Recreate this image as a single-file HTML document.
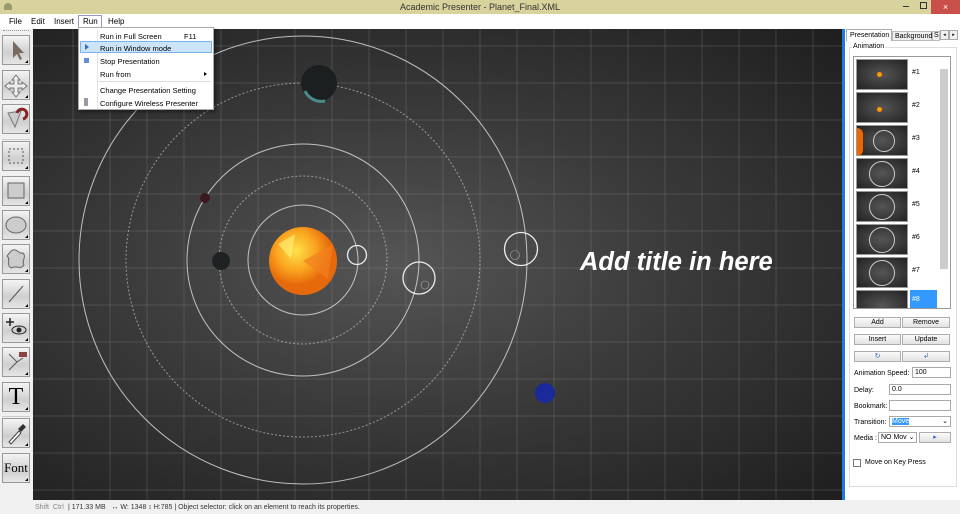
<!DOCTYPE html>
<html><head><style>
*{margin:0;padding:0;box-sizing:border-box}
body{width:960px;height:514px;overflow:hidden;background:#f0f0f0;font-family:"Liberation Sans",sans-serif;font-size:8px;color:#000;position:relative}
.abs{position:absolute}
#title{left:0;top:0;width:960px;height:14px;background:#d8d29c;}
#menu{top:14px;left:0;width:960px;height:15px;background:#fff;font-size:8px}
#menu span{position:absolute;top:3px}
.tool{position:absolute;left:2px;width:28px;height:30px;background:linear-gradient(#f4f4f4,#cfcfcf 60%,#e6e6e6);border:1px solid #999;}
.tool:after{content:"";position:absolute;right:1px;bottom:1px;border-left:3px solid transparent;border-bottom:3px solid #000}
#canvas{left:33px;top:29px;width:809px;height:471px;background:radial-gradient(ellipse at 45% 50%,#555 0%,#3a3a3a 45%,#1e1e1e 100%)}
#dd{left:78px;top:27px;width:136px;height:83px;background:#fff;border:1px solid #aaa;box-shadow:2px 2px 3px rgba(0,0,0,.4);font-size:7.5px}
#dd div{position:absolute;left:21px}
#panel{left:842px;top:29px;width:118px;height:471px;background:#fff;border-left:3px solid #1c7be0}
.btn{position:absolute;height:11px;background:linear-gradient(#fafafa,#e2e2e2);border:1px solid #adadad;font-size:7px;text-align:center;line-height:9px}
.inp{position:absolute;height:11px;background:#fff;border:1px solid #aaa;font-size:7px;line-height:9px;padding-left:2px}
.lbl{position:absolute;font-size:7px}
.th{position:absolute;left:12px;width:52px;height:31px;background:radial-gradient(#555,#222);border:1px solid #999;overflow:hidden}
.tn{position:absolute;left:68px;font-size:7px}
#status{left:33px;top:501px;width:927px;height:13px;font-size:7px;color:#333}
#status span{position:absolute;top:3px}
</style></head><body>
<div id="title" class="abs">
 <div class="abs" style="left:4px;top:3px;width:8px;height:7px;background:#9a9a70;border-radius:4px 4px 0 0"></div>
 <div class="abs" style="left:0;width:960px;top:2px;text-align:center;font-size:9px;color:#333">Academic Presenter - Planet_Final.XML</div>
 <div class="abs" style="left:903px;top:6px;width:6px;height:1px;background:#333"></div>
 <div class="abs" style="left:920px;top:2px;width:7px;height:7px;border:1px solid #333"></div>
 <div class="abs" style="left:931px;top:0;width:29px;height:14px;background:#c9504a;color:#fff;text-align:center;font-size:9px;line-height:14px">×</div>
</div>
<div id="menu" class="abs">
 <span style="left:9px">File</span><span style="left:31px">Edit</span><span style="left:54px">Insert</span>
 <div class="abs" style="left:78px;top:1px;width:24px;height:14px;border:1px solid #99b;border-bottom:none;background:#fff"></div>
 <span style="left:83px">Run</span><span style="left:108px">Help</span>
</div>
<div class="abs" style="left:3px;top:30px;width:26px;border-top:1px dotted #999"></div>
<div class="tool" style="top:35px"><svg width="26" height="28"><path d="M10 5 L10 22 L14 18 L17 24 L19 23 L16 17 L21 17 Z" fill="#7a6a60"/></svg></div>
<div class="tool" style="top:70px"><svg width="26" height="28"><path d="M13 4 L17 9 L15 9 L15 13 L19 13 L19 11 L24 15 L19 19 L19 17 L15 17 L15 21 L17 21 L13 26 L9 21 L11 21 L11 17 L7 17 L7 19 L2 15 L7 11 L7 13 L11 13 L11 9 L9 9 Z" fill="#eee" stroke="#777"/></svg></div>
<div class="tool" style="top:104px"><svg width="26" height="28"><path d="M5 8 L18 6 L12 22 Z" fill="#ccc" stroke="#777"/><path d="M14 8 a5 5 0 1 1 6 6" stroke="#822" stroke-width="3" fill="none"/></svg></div>
<div class="abs" style="left:2px;top:139px;width:28px;border-top:1px solid #ccc"></div>
<div class="tool" style="top:141px"><svg width="26" height="28"><rect x="6" y="7" width="14" height="14" fill="none" stroke="#555" stroke-dasharray="2 2"/></svg></div>
<div class="tool" style="top:176px"><svg width="26" height="28"><rect x="5" y="6" width="16" height="15" fill="#ccc" stroke="#666"/></svg></div>
<div class="tool" style="top:210px"><svg width="26" height="28"><ellipse cx="13" cy="14" rx="10" ry="8" fill="#ccc" stroke="#666"/></svg></div>
<div class="tool" style="top:244px"><svg width="26" height="28"><path d="M8 6 C14 2 16 10 20 8 C24 12 18 16 21 20 C18 25 12 20 8 23 C3 20 8 14 4 11 Z" fill="#ccc" stroke="#666"/></svg></div>
<div class="tool" style="top:279px"><svg width="26" height="28"><path d="M6 22 L20 6" stroke="#555"/></svg></div>
<div class="tool" style="top:313px"><svg width="26" height="28"><path d="M3 8 H11 M7 4 V12" stroke="#222" stroke-width="1.5"/><ellipse cx="16" cy="16" rx="7" ry="4" fill="none" stroke="#222"/><circle cx="16" cy="16" r="2.5" fill="#222"/></svg></div>
<div class="tool" style="top:347px"><svg width="26" height="28"><path d="M6 6 L14 14 L6 22 M14 14 L20 10" stroke="#555" fill="none"/><rect x="16" y="4" width="8" height="5" fill="#844"/></svg></div>
<div class="tool" style="top:382px"><div style="font-family:'Liberation Serif',serif;font-size:24px;text-align:center;line-height:28px">T</div></div>
<div class="abs" style="left:2px;top:416px;width:28px;border-top:1px solid #ccc"></div>
<div class="tool" style="top:418px"><svg width="26" height="28"><path d="M6 23 L16 12 L18 14 L8 25 Z" fill="#fff" stroke="#444"/><path d="M15 10 L20 5 L23 8 L18 13 Z" fill="#333"/></svg></div>
<div class="tool" style="top:453px"><div style="font-family:'Liberation Serif',serif;font-size:13px;text-align:center;line-height:28px">Font</div></div>

<div id="canvas" class="abs"></div>
<svg class="abs" style="left:33px;top:29px" width="809" height="471">
 <g stroke="#909090" stroke-opacity=".28" stroke-width="1">
  <path d="M40 0V471M77 0V471M114 0V471M151 0V471M188 0V471M225 0V471M262 0V471M299 0V471M336 0V471M373 0V471M410 0V471M447 0V471M484 0V471M521 0V471M558 0V471M595 0V471M632 0V471M669 0V471M706 0V471M743 0V471M780 0V471"/>
  <path d="M0 17H809M0 54H809M0 91H809M0 128H809M0 165H809M0 202H809M0 239H809M0 276H809M0 313H809M0 350H809M0 387H809M0 424H809M0 461H809"/>
 </g>
 <g fill="none" stroke="#d8d8d8" stroke-opacity=".85" transform="translate(270,231)">
  <circle r="55"/><circle r="84" stroke-dasharray="2 2" stroke-opacity=".6"/><circle r="116"/><circle r="177" stroke-dasharray="2 2" stroke-opacity=".6"/><circle r="224"/>
 </g>
 <defs><radialGradient id="sun" cx="40%" cy="35%"><stop offset="0" stop-color="#ffe24a"/><stop offset=".6" stop-color="#f9a21e"/><stop offset="1" stop-color="#e66a0c"/></radialGradient></defs>
 <circle cx="270" cy="232" r="34" fill="url(#sun)"/>
 <path d="M270 232 L300 215 L295 250Z" fill="#f27f1f" opacity=".7"/>
 <path d="M245 215 L262 205 L258 230Z" fill="#fff27a" opacity=".6"/>
 <circle cx="286" cy="54" r="18" fill="#1c1f20"/><path d="M272 62 a18 18 0 0 0 20 10" stroke="#4a8a8a" stroke-width="3" fill="none"/>
 <circle cx="172" cy="169" r="5" fill="#3a1a1c"/>
 <circle cx="188" cy="232" r="9" fill="#1e2222"/>
 <circle cx="512" cy="364" r="10" fill="#1a2a9a"/>
 <g fill="none" stroke="#eee" stroke-width="1.3">
  <circle cx="324" cy="226" r="9.5"/><circle cx="386" cy="249" r="16"/><circle cx="488" cy="220" r="16.5"/>
 </g>
 <circle cx="392" cy="256" r="4" fill="none" stroke="#aaa" stroke-width=".6"/>
 <circle cx="482" cy="226" r="4.5" fill="none" stroke="#aaa" stroke-width=".6"/>
 <text x="547" y="241" fill="#fff" font-family="Liberation Sans" font-weight="bold" font-style="italic" font-size="25.5">Add title in here</text>
</svg>

<div id="dd" class="abs">
 <div class="abs" style="left:18px;top:2px;width:0;height:79px;border-left:1px solid #e4e4e4"></div>
 <div style="top:4px">Run in Full Screen</div><div style="top:4px;left:105px">F11</div>
 <div class="abs" style="left:1px;top:13px;width:132px;height:12px;background:#cce4f7;border:1px solid #7eb4ea"></div>
 <div style="top:16px">Run in Window mode</div>
 <div class="abs" style="left:6px;top:16px;border-left:4px solid #3a6ad0;border-top:3px solid transparent;border-bottom:3px solid transparent"></div>
 <div class="abs" style="left:5px;top:30px;width:5px;height:5px;background:#6a8ae0"></div>
 <div style="top:29px">Stop Presentation</div>
 <div style="top:42px">Run from</div>
 <div class="abs" style="left:125px;top:44px;border-left:3px solid #000;border-top:2px solid transparent;border-bottom:2px solid transparent"></div>
 <div class="abs" style="left:18px;top:53px;width:114px;border-top:1px solid #ddd"></div>
 <div style="top:58px">Change Presentation Setting</div>
 <div class="abs" style="left:5px;top:70px;width:4px;height:8px;background:#99a;"></div>
 <div style="top:71px">Configure Wireless Presenter</div>
</div>

<div id="panel" class="abs">
 <div class="abs" style="left:1px;top:0;width:46px;height:12px;background:#fff;border:1px solid #aaa;border-bottom:none;font-size:7px;padding:2px 0 0 3px">Presentation</div>
 <div class="abs" style="left:47px;top:2px;width:40px;height:10px;background:#f0f0f0;border:1px solid #bbb;font-size:7px;padding:1px 0 0 2px">Background</div>
 <div class="abs" style="left:87px;top:2px;width:8px;height:10px;background:#f0f0f0;border:1px solid #bbb;font-size:7px;padding-left:1px">S</div>
 <div class="abs" style="left:95px;top:1px;width:9px;height:10px;background:#f0f0f0;border:1px solid #aaa;font-size:5px;text-align:center;line-height:8px">◂</div>
 <div class="abs" style="left:104px;top:1px;width:9px;height:10px;background:#f0f0f0;border:1px solid #aaa;font-size:5px;text-align:center;line-height:8px">▸</div>
 <div class="abs" style="left:4px;top:18px;width:108px;height:440px;border:1px solid #ddd"></div>
 <div class="lbl" style="left:7px;top:14px;background:#fff;padding:0 1px">Animation</div>
 <div class="abs" style="left:8px;top:27px;width:98px;height:253px;border:1px solid #999;overflow:hidden;background:#fff">
  <div class="th" style="top:2px;left:2px"><div class="abs" style="left:20px;top:12px;width:5px;height:5px;border-radius:3px;background:#f90"></div></div><div class="tn" style="top:12px;left:58px">#1</div>
  <div class="th" style="top:35px;left:2px"><div class="abs" style="left:20px;top:14px;width:5px;height:5px;border-radius:3px;background:#f90"></div></div><div class="tn" style="top:45px;left:58px">#2</div>
  <div class="th" style="top:68px;left:2px"><div class="abs" style="left:-6px;top:2px;width:12px;height:28px;border-radius:6px;background:#e60"></div><div class="abs" style="left:16px;top:4px;width:22px;height:22px;border-radius:11px;border:1px solid #ccc"></div></div><div class="tn" style="top:78px;left:58px">#3</div>
  <div class="th" style="top:101px;left:2px"><div class="abs" style="left:12px;top:2px;width:26px;height:26px;border-radius:13px;border:1px solid #ccc"></div></div><div class="tn" style="top:111px;left:58px">#4</div>
  <div class="th" style="top:134px;left:2px"><div class="abs" style="left:12px;top:2px;width:26px;height:26px;border-radius:13px;border:1px solid #ccc"></div></div><div class="tn" style="top:144px;left:58px">#5</div>
  <div class="th" style="top:167px;left:2px"><div class="abs" style="left:12px;top:2px;width:26px;height:26px;border-radius:13px;border:1px solid #ccc"></div></div><div class="tn" style="top:177px;left:58px">#6</div>
  <div class="th" style="top:200px;left:2px"><div class="abs" style="left:12px;top:2px;width:26px;height:26px;border-radius:13px;border:1px solid #ccc"></div></div><div class="tn" style="top:210px;left:58px">#7</div>
  <div class="th" style="top:233px;left:2px"></div>
  <div class="abs" style="left:56px;top:233px;width:27px;height:19px;background:#3399ff;color:#fff;font-size:7px;padding:6px 0 0 2px">#8</div>
  <div class="abs" style="left:86px;top:12px;width:8px;height:200px;background:#ccc"></div>
 </div>
 <div class="btn" style="left:9px;top:288px;width:47px">Add</div>
 <div class="btn" style="left:57px;top:288px;width:48px">Remove</div>
 <div class="btn" style="left:9px;top:305px;width:47px">Insert</div>
 <div class="btn" style="left:57px;top:305px;width:48px">Update</div>
 <div class="btn" style="left:9px;top:322px;width:47px;color:#36c">↻</div>
 <div class="btn" style="left:57px;top:322px;width:48px;color:#36c">↲</div>
 <div class="lbl" style="left:9px;top:341px">Animation Speed:</div>
 <div class="inp" style="left:67px;top:338px;width:39px">100</div>
 <div class="lbl" style="left:9px;top:358px">Delay:</div>
 <div class="inp" style="left:44px;top:355px;width:62px">0.0</div>
 <div class="lbl" style="left:9px;top:374px">Bookmark:</div>
 <div class="inp" style="left:44px;top:371px;width:62px"></div>
 <div class="lbl" style="left:9px;top:390px">Transition:</div>
 <div class="inp" style="left:44px;top:387px;width:62px"><span style="background:#3399ff;color:#fff">Move</span><span style="position:absolute;right:2px">⌄</span></div>
 <div class="lbl" style="left:9px;top:406px">Media :</div>
 <div class="inp" style="left:33px;top:403px;width:39px">NO Mov ⌄</div>
 <div class="btn" style="left:74px;top:403px;width:32px;color:#36c">▸</div>
 <div class="abs" style="left:8px;top:430px;width:8px;height:8px;border:1px solid #777;background:#fff"></div>
 <div class="lbl" style="left:20px;top:430px">Move on Key Press</div>
</div>

<div id="status" class="abs">
 <span style="left:2px;color:#888">Shift &nbsp;Ctrl</span>
 <span style="left:35px">| 171.33 MB &nbsp; ↔ W: 1348 ↕ H:785 | Object selector: click on an element to reach its properties.</span>
</div>
</body></html>
